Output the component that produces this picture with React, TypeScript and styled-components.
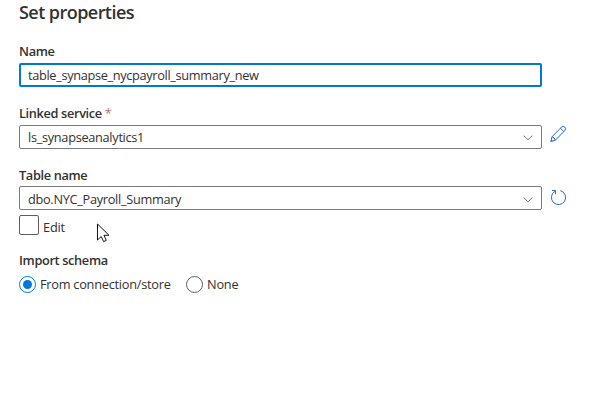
import React from 'react';
import styled, { createGlobalStyle } from 'styled-components';

const GlobalStyle = createGlobalStyle`
  * { box-sizing: border-box; }
  body { margin: 0; background: #fff; color: #323130; font: 12.75px "Open Sans", "Noto Sans", sans-serif; }
`;
const Panel = styled.main`
  height: 414px;
  padding: 0 19px;
  position: relative;
  overflow: hidden;
`;
const Title = styled.h1`
  margin: 0;
  height: 41px;
  line-height: 25px;
  font-size: 18px;
  font-weight: 600;
  letter-spacing: -0.55px;
  white-space: nowrap;
`;
const Label = styled.div<{ $height?: number }>`
  height: ${p => p.$height ?? 22}px;
  line-height: 20px;
  font-weight: 600;
  letter-spacing: -0.34px;
  white-space: nowrap;
`;
const Required = styled.span`
  color: #c4686c;
  font-weight: 400;
`;
const FieldRow = styled.div<{ $height: number }>`
  display: flex;
  align-items: flex-start;
  gap: 8px;
  height: ${p => p.$height}px;
`;
const Field = styled.div<{ $focused?: boolean; $drop?: number }>`
  width: 523px;
  height: 24px;
  padding: ${p => p.$drop ?? 0}px ${p => (p.$focused ? 7 : 8)}px 0;
  display: flex;
  align-items: center;
  justify-content: space-between;
  border: ${p => (p.$focused ? '2px solid #0078d4' : '1px solid #7d7b79')};
  border-radius: 2px;
  white-space: nowrap;
`;
const Value = styled.span<{ $spacing: number }>`
  letter-spacing: ${p => p.$spacing}px;
`;
const CheckRow = styled.div`
  display: flex;
  height: 35px;
  gap: 4px;
  line-height: 24px;
`;
const Checkbox = styled.span`
  width: 20px;
  height: 20px;
  border: 1px solid #605e5c;
  border-radius: 2px;
`;
const RadioGroup = styled.div`
  display: flex;
  align-items: center;
  height: 25px;
  gap: 15px;
`;
const Option = styled.div<{ $width?: number }>`
  display: flex;
  align-items: center;
  gap: 4px;
  white-space: nowrap;
  width: ${p => (p.$width ? `${p.$width}px` : 'auto')};
`;
const OptionText = styled(Value)`
  padding-bottom: 2px;
`;
const Radio = styled.span<{ $checked?: boolean }>`
  display: flex;
  flex: none;
  align-items: center;
  justify-content: center;
  width: 17px;
  height: 17px;
  border: 1px solid ${p => (p.$checked ? '#0078d4' : '#605e5c')};
  border-radius: 50%;
  &::after {
    content: '';
    width: 9px;
    height: 9px;
    border-radius: 50%;
    background: ${p => (p.$checked ? '#0078d4' : 'transparent')};
  }
`;
const ActionIcon = styled.svg`
  width: 17px;
  height: 20px;
  flex: none;
  fill: none;
  stroke: #2468d0;
`;
const Cursor = styled.svg`
  position: absolute;
  left: 97px;
  top: 223px;
`;

const Chevron = () => (
  <svg width="10" height="8" viewBox="0 0 10 8" fill="none" stroke="#605e5c" strokeWidth="0.9">
    <path d="M0.8 2.6 5 6.8 9.2 2.6" />
  </svg>
);

const Pencil = () => (
  <ActionIcon viewBox="0 0 17 20">
    <path d="M.8 16.5 2 11.8 11.7 1.9Q13.3.6 14.8 2.1T15.1 5.2L5.4 15.2ZM10.3 3.2l3.5 3.4M2 11.8Q4.5 12.3 5.4 15.2M1.1 15l1.2 1.1" />
  </ActionIcon>
);

const Refresh = () => (
  <ActionIcon viewBox="0 0 17 20">
    <path d="M10.3 4.6A7.1 7.1 0 1 1 5 5.3M2 4.5h3.5v3.6" />
  </ActionIcon>
);

export default function App() {
  return (
    <>
      <GlobalStyle />
      <Panel>
        <Title>Set properties</Title>
        <Label>Name</Label>
        <FieldRow $height={40}>
          <Field $focused><Value $spacing={-0.33}>table_synapse_nycpayroll_summary_new</Value></Field>
        </FieldRow>
        <Label>Linked service <Required>*</Required></Label>
        <FieldRow $height={40}>
          <Field><Value $spacing={-0.3}>ls_synapseanalytics1</Value><Chevron /></Field>
          <Pencil />
        </FieldRow>
        <Label $height={21}>Table name</Label>
        <FieldRow $height={29}>
          <Field $drop={1}><Value $spacing={-0.3}>dbo.NYC_Payroll_Summary</Value><Chevron /></Field>
          <Refresh />
        </FieldRow>
        <CheckRow><Checkbox /><Value $spacing={-0.2}>Edit</Value></CheckRow>
        <Label>Import schema</Label>
        <RadioGroup>
          <Option $width={152}><Radio $checked /><OptionText $spacing={-0.25}>From connection/store</OptionText></Option>
          <Option><Radio /><OptionText $spacing={-0.2}>None</OptionText></Option>
        </RadioGroup>
        <Cursor width="13" height="20" viewBox="0 0 13 20">
          <path d="M.5 1v16l3.7-3.5 2.4 5.1 2.7-1.2L7 12.3h5Z" fill="#fff" stroke="#14141f" />
        </Cursor>
      </Panel>
    </>
  );
}
